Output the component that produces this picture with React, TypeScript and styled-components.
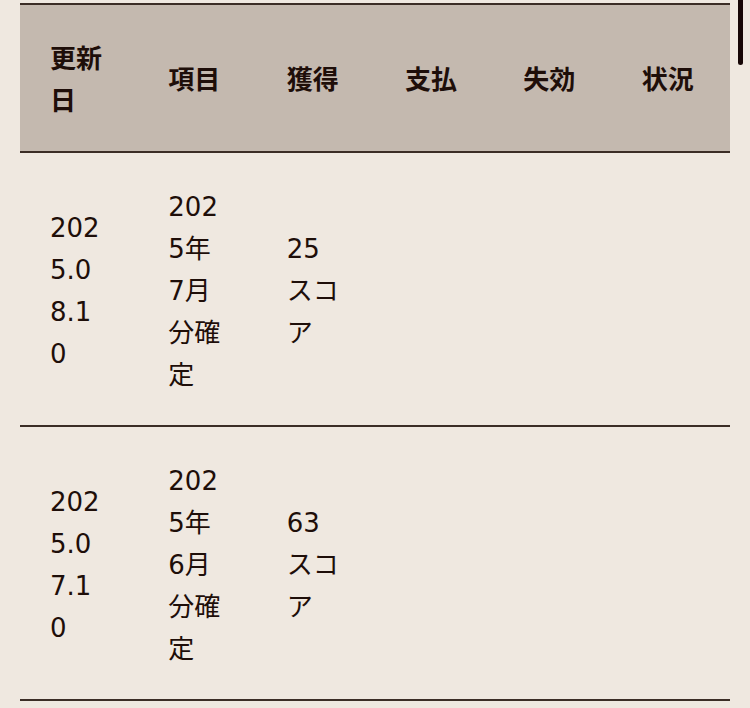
import React from "react";
import styled, { createGlobalStyle } from "styled-components";

const GlobalStyle = createGlobalStyle`
    html, body {
        margin: 0;
        padding: 0;
        background: #EFE8E0;
    }
    body {
        font-family: "DejaVu Sans", "Noto Sans CJK JP", sans-serif;
        color: #1E0E09;
    }
`;

const Page = styled.div`
    position: relative;
    width: 750px;
    height: 708px;
    overflow: hidden;
    padding: 3px 20px 0;
    box-sizing: border-box;
`;

const ScrollThumb = styled.div`
    position: absolute;
    top: -6px;
    right: 7px;
    width: 5px;
    height: 71px;
    border-radius: 3px;
    background: #160606;
`;

const Table = styled.table`
    width: 710px;
    table-layout: fixed;
    border-collapse: collapse;
`;

const HeadRow = styled.tr`
    background: #C4B9AF;
    border-top: 2px solid #3B2D26;
    border-bottom: 2px solid #3B2D26;
`;

const HeadCell = styled.th`
    padding: 31px 32px 31px 30px;
    text-align: left;
    vertical-align: middle;
    font-family: "Noto Sans CJK JP", sans-serif;
    font-size: 26px;
    font-weight: 700;
    line-height: 42px;
    word-break: break-all;
`;

const BodyRow = styled.tr`
    border-bottom: 2px solid #3B2D26;
`;

const Cell = styled.td`
    padding: 33px 32px 29px 30px;
    vertical-align: middle;
    font-size: 26px;
    font-weight: 400;
    line-height: 42px;
    word-break: break-all;
`;

interface HistoryRow {
    date: string;
    item: string;
    earned: string;
    paid: string;
    expired: string;
    status: string;
}

const headers = ["更新日", "項目", "獲得", "支払", "失効", "状況"];

const rows: HistoryRow[] = [
    { date: "2025.08.10", item: "2025年7月分確定", earned: "25スコア", paid: "", expired: "", status: "" },
    { date: "2025.07.10", item: "2025年6月分確定", earned: "63スコア", paid: "", expired: "", status: "" },
];

export default function App() {
    return (
        <Page>
            <GlobalStyle />
            <Table>
                <thead>
                    <HeadRow>
                        {headers.map((h) => (
                            <HeadCell key={h}>{h}</HeadCell>
                        ))}
                    </HeadRow>
                </thead>
                <tbody>
                    {rows.map((r) => (
                        <BodyRow key={r.date}>
                            <Cell>{r.date}</Cell>
                            <Cell>{r.item}</Cell>
                            <Cell>{r.earned}</Cell>
                            <Cell>{r.paid}</Cell>
                            <Cell>{r.expired}</Cell>
                            <Cell>{r.status}</Cell>
                        </BodyRow>
                    ))}
                </tbody>
            </Table>
            <ScrollThumb />
        </Page>
    );
}
